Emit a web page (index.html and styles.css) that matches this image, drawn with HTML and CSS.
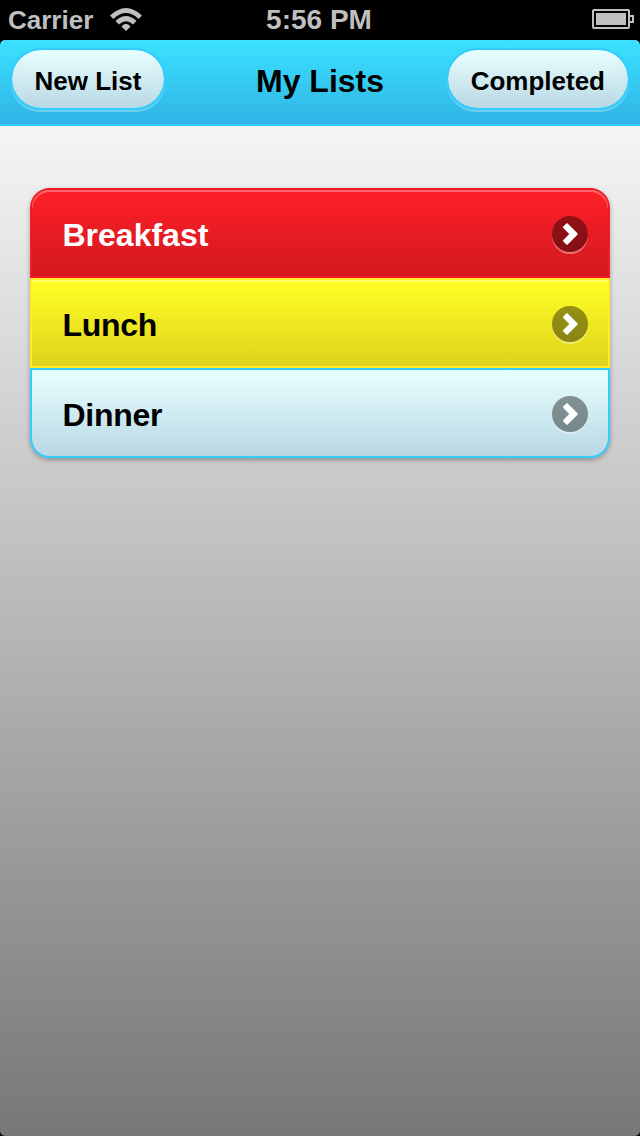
FILE: index.html
```html
<!DOCTYPE html>
<html lang="en">
<head>
<meta charset="utf-8">
<title>My Lists</title>
<link rel="stylesheet" href="styles.css">
</head>
<body>
<div class="status">
  <div class="status-left">
    <span class="carrier">Carrier</span>
    <svg class="wifi" width="32" height="23" viewBox="0 0 32 23">
      <path d="M0 7.5Q16-7.5 32 7.5L28.6 11Q16-.8 3.4 11Z"/>
      <path d="M5.5 13Q16 3.2 26.5 13L23 16.5Q16 10 9 16.5Z"/>
      <path d="M11.4 18.6Q16 13 20.6 18.6L16 23Z"/>
    </svg>
  </div>
  <span class="time">5:56 PM</span>
  <svg class="battery" width="42" height="20" viewBox="0 0 42 20">
    <rect x="1" y="1" width="36" height="18" rx="1" fill="none" stroke="#bfbfbf" stroke-width="2"/>
    <rect x="4" y="4" width="30" height="12" fill="#bfbfbf"/>
    <path d="M38 7H41V13H38" fill="none" stroke="#bfbfbf" stroke-width="2"/>
  </svg>
</div>
<div class="app">
  <header class="header">
    <button class="btn">New List</button>
    <h1 class="title">My Lists</h1>
    <button class="btn btn-done">Completed</button>
  </header>
  <main class="content">
    <ul class="list">
      <li class="item red"><span class="name">Breakfast</span><svg class="arrow" viewBox="0 0 36 36"><path d="M15 8.3L24.7 18L15 27.7L12 24.7L18.7 18L12 11.3Z"/></svg></li>
      <li class="item yellow"><span class="name tight">Lunch</span><svg class="arrow" viewBox="0 0 36 36"><path d="M15 8.3L24.7 18L15 27.7L12 24.7L18.7 18L12 11.3Z"/></svg></li>
      <li class="item blue"><span class="name tight">Dinner</span><svg class="arrow" viewBox="0 0 36 36"><path d="M15 8.3L24.7 18L15 27.7L12 24.7L18.7 18L12 11.3Z"/></svg></li>
    </ul>
  </main>
</div>
</body>
</html>
```
FILE: styles.css
```css
* { box-sizing: border-box; }
body {
  margin: 0;
  width: 640px;
  height: 1136px;
  overflow: hidden;
  background: #000;
  font-family: "Liberation Sans", Arial, sans-serif;
  font-weight: bold;
}
.status {
  height: 40px;
  display: grid;
  grid-template-columns: 1fr auto 1fr;
  align-items: center;
  padding: 0 6px 2px 8px;
  color: #bfbfbf;
}
.status-left { display: flex; align-items: center; gap: 17px; }
.carrier { font-size: 26px; line-height: 36px; padding-top: 2px; }
.wifi { fill: #bfbfbf; }
.time { font-size: 28px; line-height: 36px; padding: 2px 4px 0 0; }
.battery { justify-self: end; }
.app {
  height: 1096px;
  border-radius: 5px;
  overflow: hidden;
}
.header {
  height: 86px;
  padding: 8px 10px 0;
  display: grid;
  grid-template-columns: 1fr auto 1fr;
  align-items: start;
  background: linear-gradient(#3be1ff, #2fb4e5);
  border-bottom: 2px solid #3cf;
}
.btn {
  height: 62px;
  padding: 4px 22.5px 0;
  justify-self: start;
  border: 2px solid #3cf;
  border-radius: 31px;
  background: linear-gradient(#e8ffff, #b9d8e4) padding-box;
  box-shadow: 0 2px 0 rgba(255, 255, 255, .3);
  font: bold 26px/54px "Liberation Sans", Arial, sans-serif;
  color: #000;
}
.btn-done { justify-self: end; padding: 4px 23px 0; }
.title { margin: 0; font-size: 32px; line-height: 66px; }
.content {
  height: 1010px;
  padding: 62px 30px 0;
  background: linear-gradient(#f5f5f5, #777);
}
.list {
  list-style: none;
  margin: 0;
  padding: 0;
  border-radius: 20px;
  box-shadow: 0 2px 5px rgba(0, 0, 0, .3);
}
.item {
  height: 90px;
  padding: 2px 20px 0 30.5px;
  display: flex;
  justify-content: space-between;
  align-items: center;
  border: 2px solid;
  font-size: 32px;
}
.name { padding-top: 2px; }
.tight { letter-spacing: -.3px; }
.red {
  color: #fff;
  border-color: #ee1c25;
  border-radius: 20px 20px 0 0;
  background: linear-gradient(#ff1f28, #d2191f) padding-box;
  box-shadow: inset 0 2px 0 rgba(255, 255, 255, .3);
}
.yellow {
  color: #000;
  border-color: #ffec22;
  background: linear-gradient(#ffff25, #dfd21d) padding-box;
  box-shadow: inset 0 2px 0 rgba(255, 255, 255, .3);
}
.blue {
  color: #000;
  border-color: #3cf;
  border-radius: 0 0 20px 20px;
  background: linear-gradient(#e8ffff, #b9d8e4) padding-box;
}
.arrow {
  width: 36px;
  height: 36px;
  border-radius: 50%;
  background: rgba(0, 0, 0, .4);
  box-shadow: 0 2px 0 rgba(255, 255, 255, .4);
  fill: #fff;
  stroke: #fff;
  stroke-width: 2;
  stroke-linejoin: round;
}
```
